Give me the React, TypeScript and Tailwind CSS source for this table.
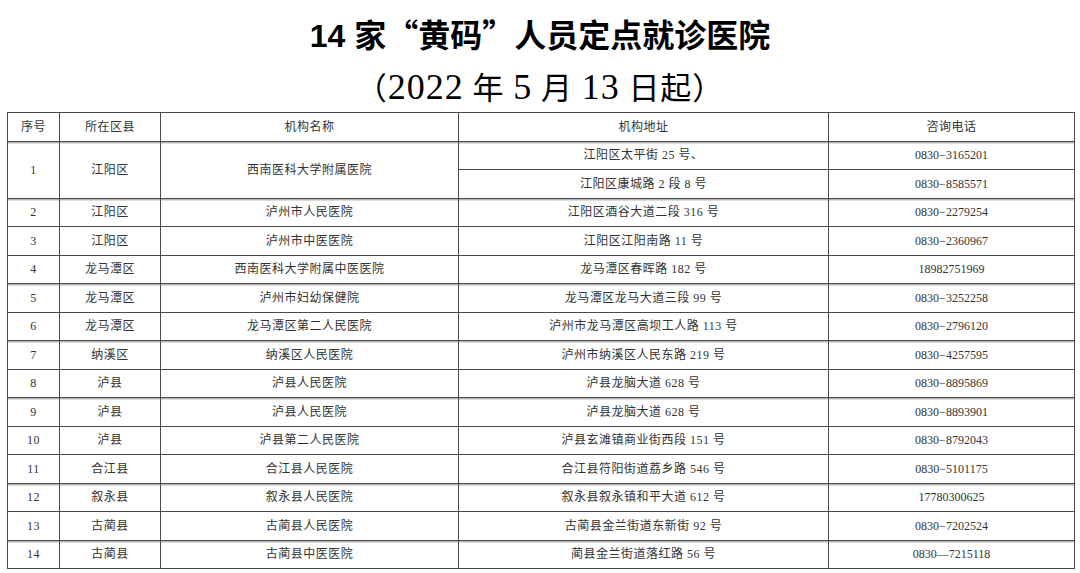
import React from "react";

type Row = {
  no: string;
  district: string;
  name: string;
  addr: string;
  tel: string;
  soft?: boolean;
};

const rows: Row[] = [
  { no: "2", district: "江阳区", name: "泸州市人民医院", addr: "江阳区酒谷大道二段 316 号", tel: "0830−2279254", soft: true },
  { no: "3", district: "江阳区", name: "泸州市中医医院", addr: "江阳区江阳南路 11 号", tel: "0830−2360967" },
  { no: "4", district: "龙马潭区", name: "西南医科大学附属中医医院", addr: "龙马潭区春晖路 182 号", tel: "18982751969" },
  { no: "5", district: "龙马潭区", name: "泸州市妇幼保健院", addr: "龙马潭区龙马大道三段 99 号", tel: "0830−3252258", soft: true },
  { no: "6", district: "龙马潭区", name: "龙马潭区第二人民医院", addr: "泸州市龙马潭区高坝工人路 113 号", tel: "0830−2796120" },
  { no: "7", district: "纳溪区", name: "纳溪区人民医院", addr: "泸州市纳溪区人民东路 219 号", tel: "0830−4257595", soft: true },
  { no: "8", district: "泸县", name: "泸县人民医院", addr: "泸县龙脑大道 628 号", tel: "0830−8895869" },
  { no: "9", district: "泸县", name: "泸县人民医院", addr: "泸县龙脑大道 628 号", tel: "0830−8893901", soft: true },
  { no: "10", district: "泸县", name: "泸县第二人民医院", addr: "泸县玄滩镇商业街西段 151 号", tel: "0830−8792043" },
  { no: "11", district: "合江县", name: "合江县人民医院", addr: "合江县符阳街道荔乡路 546 号", tel: "0830−5101175" },
  { no: "12", district: "叙永县", name: "叙永县人民医院", addr: "叙永县叙永镇和平大道 612 号", tel: "17780300625", soft: true },
  { no: "13", district: "古蔺县", name: "古蔺县人民医院", addr: "古蔺县金兰街道东新街 92 号", tel: "0830−7202524" },
  { no: "14", district: "古蔺县", name: "古蔺县中医医院", addr: "蔺县金兰街道落红路 56 号", tel: "0830—7215118", soft: true },
];

const cell = "border-r border-b border-[#4a4a4a] text-center align-middle p-0 leading-none";
const soft = "shadow-[inset_0_1px_0_#b5b5b5,inset_0_2px_0_#dcdcdc]";
const cjk = { fontFamily: '"Noto Sans CJK SC", sans-serif' };

export default function App() {
  return (
    <div
      className="w-[1080px] h-[573px] bg-white text-[#333] overflow-hidden"
      style={{ fontFamily: '"Liberation Serif", "Noto Sans CJK SC", serif' }}
    >
      {/* title */}
      <h1
        className="h-[62px] pt-[17px] text-center text-[32px] font-bold leading-none text-black"
        style={{ fontFamily: '"Liberation Sans", "Noto Sans CJK SC", sans-serif' }}
      >
        14 家<span style={cjk}>“</span>黄码<span style={cjk}>”</span>人员定点就诊医院
      </h1>
      <p className="h-[50px] pt-[7px] text-center text-[31px] leading-none tracking-[1px] text-black">
        （<span className="text-[36px]">2022</span> 年 <span className="text-[36px]">5</span> 月{" "}
        <span className="text-[36px]">13</span> 日起）
      </p>

      <table className="ml-[7px] w-[1067px] table-fixed border-separate border-spacing-0 border-l border-t border-[#4a4a4a] text-[12px] tracking-[0.5px]">
        <colgroup>
          <col className="w-[52px]" />
          <col className="w-[101px]" />
          <col className="w-[298px]" />
          <col className="w-[370px]" />
          <col className="w-[246px]" />
        </colgroup>
        <thead>
          <tr className="h-[28.5px]">
            <th className={`${cell} font-normal`}>序号</th>
            <th className={`${cell} font-normal`}>所在区县</th>
            <th className={`${cell} font-normal`}>机构名称</th>
            <th className={`${cell} font-normal`}>机构地址</th>
            <th className={`${cell} font-normal`}>咨询电话</th>
          </tr>
        </thead>
        <tbody>
          <tr className="h-[28.5px]">
            <td rowSpan={2} className={`${cell} ${soft}`}>1</td>
            <td rowSpan={2} className={`${cell} ${soft}`}>江阳区</td>
            <td rowSpan={2} className={`${cell} ${soft}`}>西南医科大学附属医院</td>
            <td className={`${cell} ${soft}`}>江阳区太平街 25 号、</td>
            <td className={`${cell} ${soft} tracking-normal`}>0830−3165201</td>
          </tr>
          <tr className="h-[28.5px]">
            <td className={cell}>江阳区康城路 2 段 8 号</td>
            <td className={`${cell} tracking-normal`}>0830−8585571</td>
          </tr>
          {rows.map((r) => (
            <tr key={r.no} className="h-[28.5px]">
              <td className={`${cell} ${r.soft ? soft : ""}`}>{r.no}</td>
              <td className={`${cell} ${r.soft ? soft : ""}`}>{r.district}</td>
              <td className={`${cell} ${r.soft ? soft : ""}`}>{r.name}</td>
              <td className={`${cell} ${r.soft ? soft : ""}`}>{r.addr}</td>
              <td className={`${cell} ${r.soft ? soft : ""} tracking-normal`}>{r.tel}</td>
            </tr>
          ))}
        </tbody>
      </table>
    </div>
  );
}
